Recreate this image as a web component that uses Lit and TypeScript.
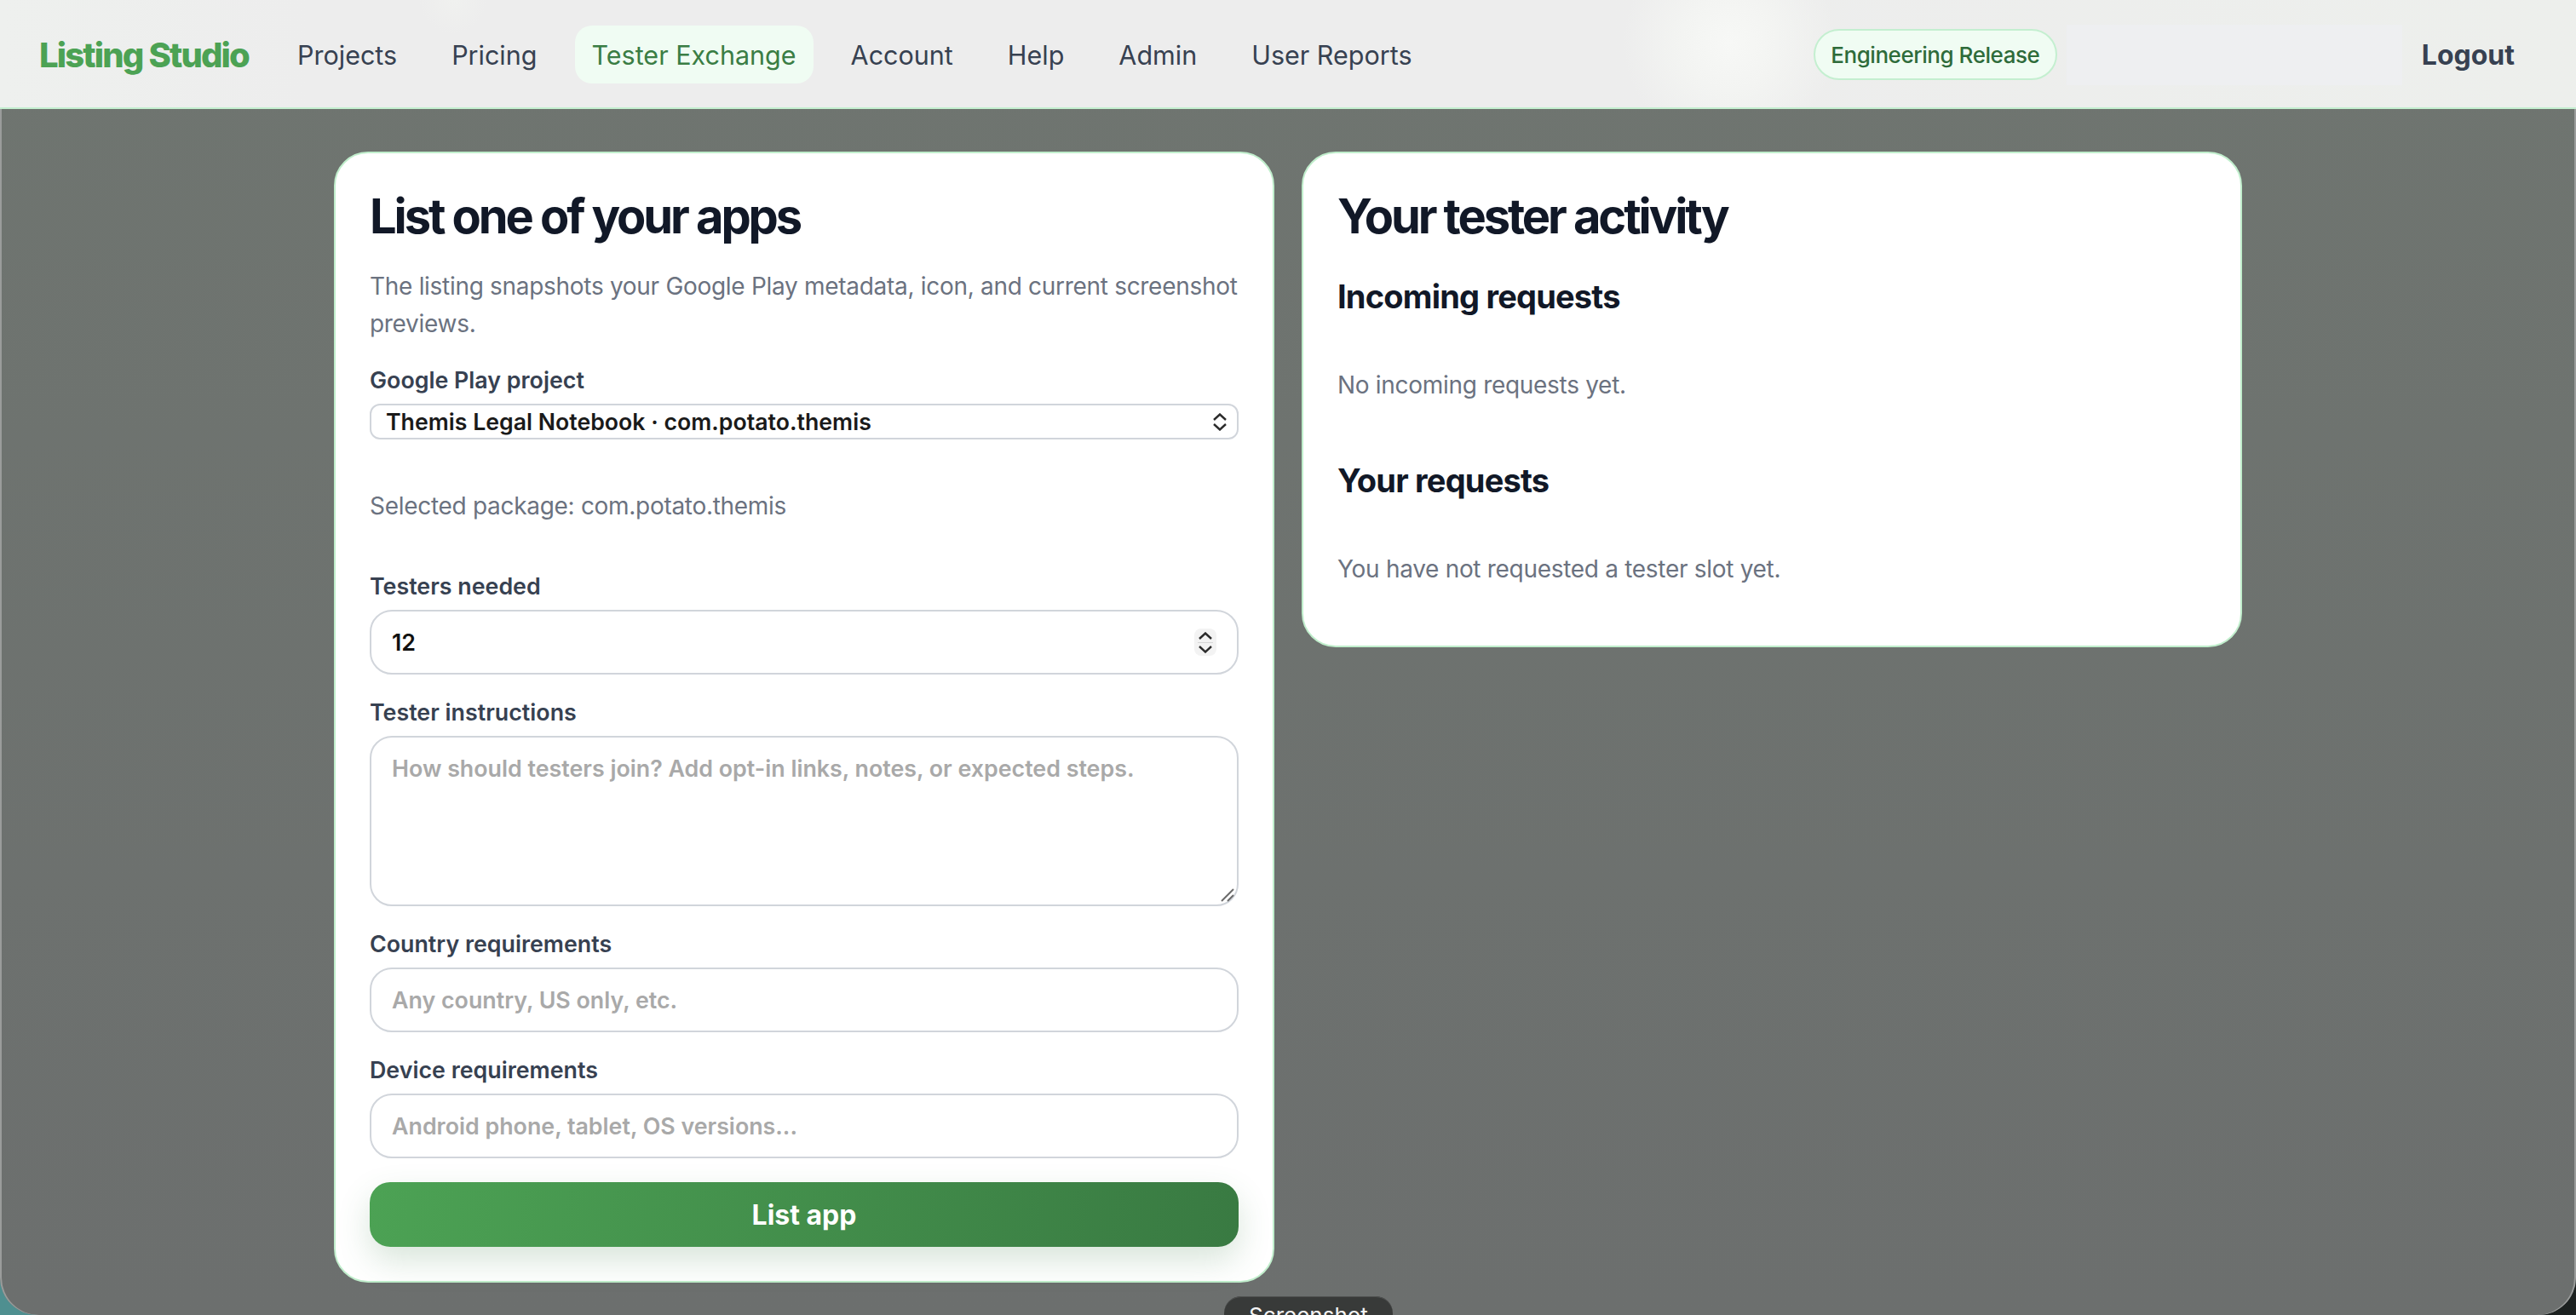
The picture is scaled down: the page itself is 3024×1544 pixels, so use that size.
import { LitElement, html, css } from "lit";
import { customElement } from "lit/decorators.js";

const NAV = [
  { label: "Projects" },
  { label: "Pricing" },
  { label: "Tester Exchange", active: true },
  { label: "Account" },
  { label: "Help" },
  { label: "Admin" },
  { label: "User Reports" },
];

@customElement("app-root")
export class AppRoot extends LitElement {
  static override styles = css`
    :host {
      display: block;
      position: relative;
      height: 1544px;
      overflow: hidden;
      font-family: Inter, "Liberation Sans", sans-serif;
      color: #111827;
      background: linear-gradient(90deg, #4f8f90 0 50%, #1c2120 50% 100%);
    }
    * {
      box-sizing: border-box;
    }
    .window {
      height: 1544px;
      overflow: hidden;
      border-radius: 0 0 44px 44px;
      box-shadow: inset 2px 0 0 #9a9c9b, inset -2px 0 0 #9a9c9b;
      background: linear-gradient(180deg, #6f7570 0%, #6c6f6e 100%);
    }
    .topbar {
      height: 128px;
      display: flex;
      align-items: center;
      padding: 2px 72px 0 46px;
      background:
        radial-gradient(ellipse 125px 125px at 2030px 50px, #f7f8f6 0%, #f3f4f2 45%, rgba(237, 238, 237, 0) 100%),
        radial-gradient(ellipse 40px 40px at 532px 0, #f0f1ef 0%, rgba(237, 237, 237, 0) 100%),
        linear-gradient(90deg, #eef0ee 0%, #ededed 12%, #ededed 62%, #edefec 100%);
      border-bottom: 2px solid #c4efd0;
    }
    .brand {
      font-size: 40px;
      font-weight: 800;
      letter-spacing: -1.85px;
      color: #4ca254;
      margin-right: 37px;
    }
    .nav {
      display: flex;
      align-items: center;
      gap: 24px;
    }
    .nav a {
      display: flex;
      align-items: center;
      height: 68px;
      padding: 0 20px;
      border-radius: 20px;
      font-size: 30.5px;
      color: #374151;
    }
    .nav a.active {
      background: #f0fcf3;
      color: #3a7d44;
    }
    .right {
      margin-left: auto;
      display: flex;
      align-items: center;
    }
    .badge {
      display: flex;
      align-items: center;
      justify-content: center;
      width: 286px;
      height: 60px;
      border-radius: 30px;
      border: 2px solid #c4efd0;
      background: #f0fcf3;
      color: #2e6b3a;
      font-size: 26px;
      font-weight: 500;
      letter-spacing: -0.45px;
    }
    .blank {
      width: 394px;
      height: 71px;
      margin-left: 11px;
      background: #eeeff1;
    }
    .logout {
      margin-left: 23px;
      font-size: 32px;
      font-weight: 700;
      color: #374151;
    }
    .content {
      width: 2240px;
      margin: 50px auto 0;
      display: grid;
      grid-template-columns: 1fr 1fr;
      gap: 32px;
      align-items: start;
    }
    .card {
      background: #fff;
      border: 2px solid #c0eecc;
      border-radius: 40px;
      padding: 40px;
    }
    .card.form {
      height: 1328px;
    }
    .card.activity {
      height: 582px;
    }
    h1 {
      margin: 0;
      font-size: 56px;
      line-height: 68px;
      font-weight: 700;
      letter-spacing: -3.1px;
      color: #111827;
    }
    h2 {
      margin: 0;
      font-size: 38px;
      line-height: 48px;
      font-weight: 700;
      letter-spacing: -0.8px;
      color: #111827;
    }
    h2.first {
      margin-top: 36px;
    }
    h2.next {
      margin-top: 66px;
    }
    p {
      margin: 0;
      font-size: 28px;
      line-height: 44px;
      letter-spacing: -0.3px;
      color: #6b7280;
    }
    p.empty {
      margin-top: 58px;
    }
    p.intro {
      margin-top: 26px;
    }
    p.selected {
      margin-top: 56px;
    }
    label {
      display: block;
      margin-top: 28px;
      font-size: 26.8px;
      line-height: 32px;
      font-weight: 600;
      color: #374151;
    }
    label.after-text {
      margin-top: 56px;
    }
    .select {
      display: flex;
      align-items: center;
      justify-content: space-between;
      height: 42px;
      margin-top: 12px;
      padding: 0 12px 0 17px;
      border: 2px solid #d1d5db;
      border-radius: 12px;
      font-size: 26.7px;
      font-weight: 600;
      color: #1a1a1a;
    }
    .select .arrows {
      display: flex;
      flex-direction: column;
      gap: 3px;
    }
    .field {
      display: flex;
      align-items: center;
      justify-content: space-between;
      height: 76px;
      margin-top: 12px;
      padding: 0 24px;
      border: 2px solid #d1d5db;
      border-radius: 26px;
      font-size: 26.8px;
      font-weight: 600;
      color: #111;
    }
    .field.area {
      position: relative;
      align-items: flex-start;
      height: 200px;
      padding-top: 20px;
    }
    .placeholder {
      color: #a9a9a9;
    }
    .stepper {
      display: flex;
      flex-direction: column;
      align-items: center;
      justify-content: center;
      gap: 3px;
      width: 26px;
      height: 32px;
      border-radius: 8px;
      background: #f3f3f3;
    }
    .stepper i {
      width: 18px;
      height: 1px;
      background: #d6d6d6;
    }
    .chev {
      display: block;
    }
    .grip {
      position: absolute;
      right: 2px;
      bottom: 2px;
    }
    .btn {
      display: flex;
      align-items: center;
      justify-content: center;
      width: 100%;
      height: 76px;
      margin-top: 28px;
      border-radius: 24px;
      background: linear-gradient(100deg, #4ca254 0%, #397a42 100%);
      color: #fff;
      font-size: 32px;
      font-weight: 700;
      box-shadow: 0 16px 38px rgba(58, 125, 68, 0.2);
    }
    .tooltip {
      position: absolute;
      left: 1437px;
      top: 1522px;
      width: 198px;
      height: 40px;
      padding-top: 7px;
      border-radius: 20px;
      background: #383a39;
      box-shadow: inset 0 1px 0 #505251;
      color: #f4f4f4;
      font-size: 26px;
      text-align: center;
    }
  `;

  private chevron(up: boolean) {
    const d = up ? "M1 8 L8 1.5 L15 8" : "M1 1 L8 7.5 L15 1";
    return html`<svg class="chev" width="16" height="9" viewBox="0 0 16 9" fill="none" stroke="#2b2b2b" stroke-width="2.4">
      <path d=${d}></path>
    </svg>`;
  }

  override render() {
    return html`
      <div class="window">
        <header class="topbar">
          <div class="brand">Listing Studio</div>
          <nav class="nav">
            ${NAV.map((n) => html`<a class=${n.active ? "active" : ""}>${n.label}</a>`)}
          </nav>
          <div class="right">
            <div class="badge">Engineering Release</div>
            <div class="blank"></div>
            <div class="logout">Logout</div>
          </div>
        </header>
        <main class="content">
          <section class="card form">
            <h1>List one of your apps</h1>
            <p class="intro">The listing snapshots your Google Play metadata, icon, and current screenshot previews.</p>
            <label>Google Play project</label>
            <div class="select">
              <span>Themis Legal Notebook · com.potato.themis</span>
              <span class="arrows">${this.chevron(true)}${this.chevron(false)}</span>
            </div>
            <p class="selected">Selected package: com.potato.themis</p>
            <label class="after-text">Testers needed</label>
            <div class="field">
              <span>12</span>
              <span class="stepper">${this.chevron(true)}<i></i>${this.chevron(false)}</span>
            </div>
            <label>Tester instructions</label>
            <div class="field area">
              <span class="placeholder">How should testers join? Add opt-in links, notes, or expected steps.</span>
              <svg class="grip" width="20" height="20" viewBox="0 0 20 20" stroke="#6b6b6b" stroke-width="2">
                <path d="M4 18 L18 4 M11 18 L18 11"></path>
              </svg>
            </div>
            <label>Country requirements</label>
            <div class="field"><span class="placeholder">Any country, US only, etc.</span></div>
            <label>Device requirements</label>
            <div class="field"><span class="placeholder">Android phone, tablet, OS versions...</span></div>
            <div class="btn">List app</div>
          </section>
          <section class="card activity">
            <h1>Your tester activity</h1>
            <h2 class="first">Incoming requests</h2>
            <p class="empty">No incoming requests yet.</p>
            <h2 class="next">Your requests</h2>
            <p class="empty">You have not requested a tester slot yet.</p>
          </section>
        </main>
      </div>
      <div class="tooltip">Screenshot</div>
    `;
  }
}
